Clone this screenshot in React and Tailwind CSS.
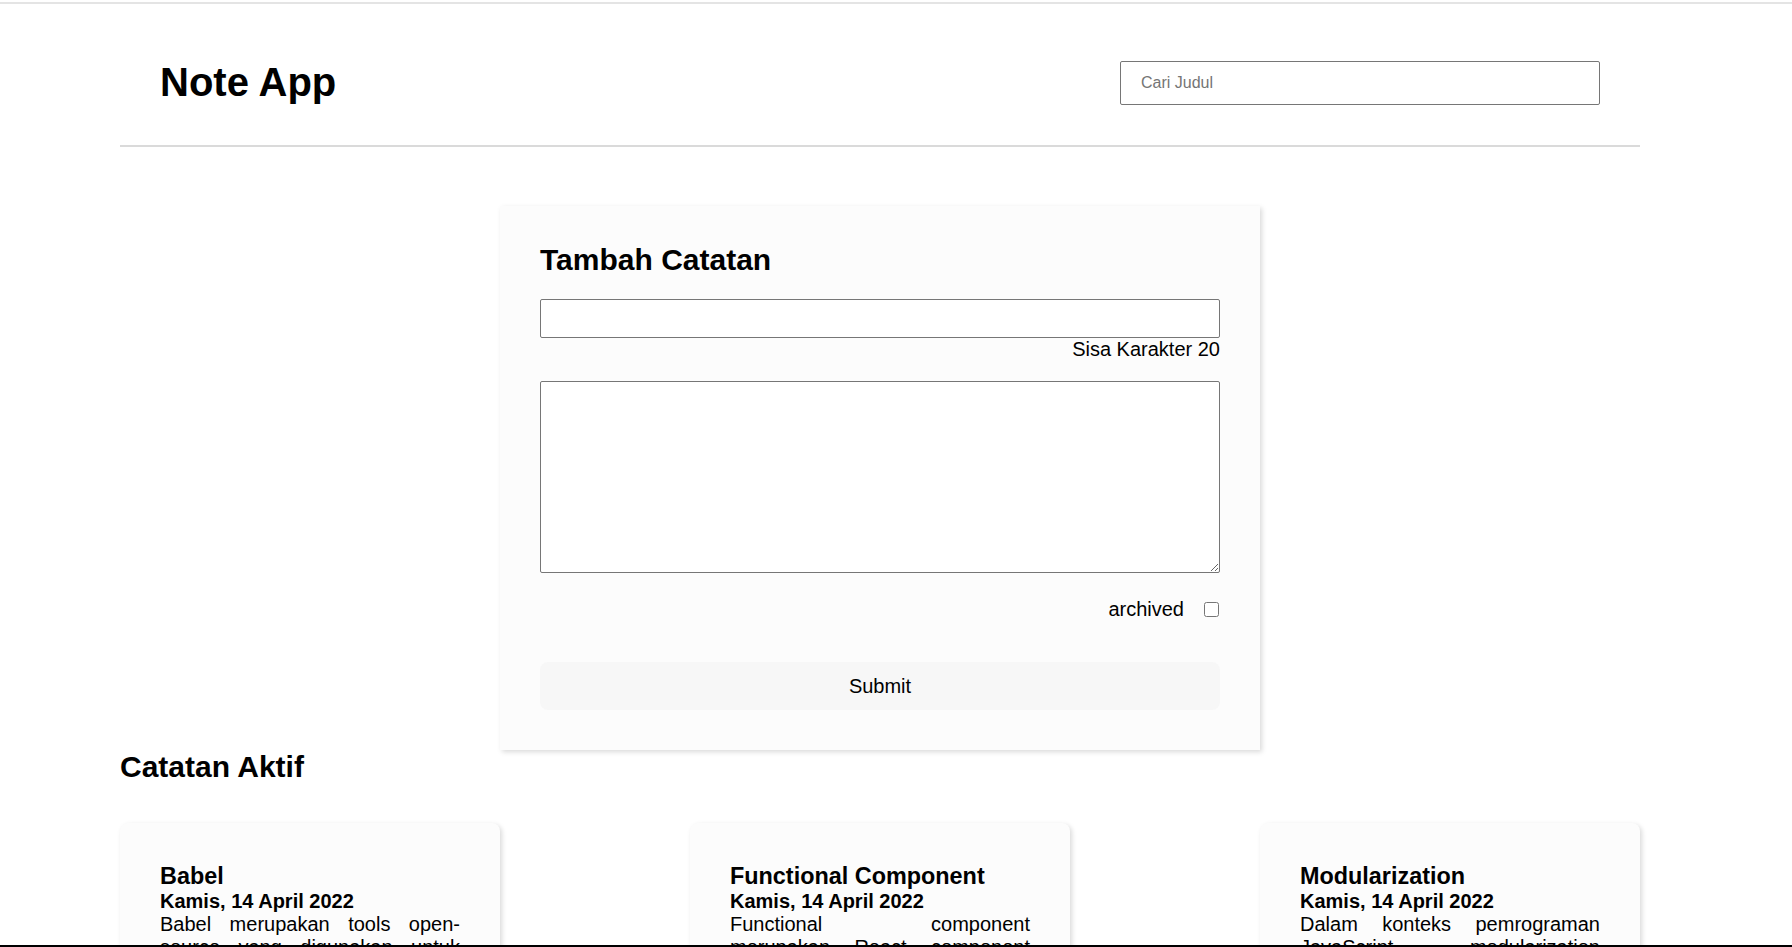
import { useState } from 'react';

const notes = [
    {
        id: 1,
        title: 'Babel',
        date: 'Kamis, 14 April 2022',
        body: 'Babel merupakan tools open-source yang digunakan untuk mengubah sintaks ECMAScript 2015+ menjadi sintaks yang didukung oleh JavaScript engine versi lama. Babel sering dipakai ketika kita menggunakan sintaks terbaru termasuk sintaks JSX.',
    },
    {
        id: 2,
        title: 'Functional Component',
        date: 'Kamis, 14 April 2022',
        body: 'Functional component merupakan React component yang dibuat menggunakan fungsi JavaScript. Agar fungsi JavaScript dapat disebut component ia harus mengembalikan React element dan dipanggil layaknya React component.',
    },
    {
        id: 3,
        title: 'Modularization',
        date: 'Kamis, 14 April 2022',
        body: 'Dalam konteks pemrograman JavaScript, modularization merupakan teknik dalam memecah atau menggunakan kode dalam berkas JavaScript secara terpisah berdasarkan tanggung jawabnya masing-masing.',
    },
];

function NoteCard({ note }) {
    return (
        <div className="w-[380px] rounded-lg bg-[#fcfcfc] p-10 shadow-[2px_2px_5px_rgba(0,0,0,0.15)]">
            <h3 className="text-[23.4px] font-bold leading-[normal]">{note.title}</h3>
            <p className="text-[20px] font-bold leading-[normal]">{note.date}</p>
            <p className="text-[20px] leading-[normal] text-justify">{note.body}</p>
        </div>
    );
}

export default function App() {
    const [title, setTitle] = useState('');
    const [body, setBody] = useState('');
    const [archived, setArchived] = useState(false);
    const [search, setSearch] = useState('');

    const maxChar = 20;

    return (
        <div className="min-h-screen bg-white text-black font-['Liberation_Sans',Arial,sans-serif] text-[20px] leading-[normal]">
            <div className="h-[4px] border-b-2 border-[#e4e4e4]" />

            <div className="ml-[120px] w-[1520px]">
                {/* Header */}
                <header className="flex items-center justify-between border-b-2 border-[#dadada] px-10 pt-[56px] pb-[40px]">
                    <h1 className="text-[40px] font-bold leading-[normal]">Note App</h1>
                    <input
                        type="text"
                        value={search}
                        onChange={(e) => setSearch(e.target.value)}
                        placeholder="Cari Judul"
                        className="h-[44px] w-[480px] rounded-[2px] border border-[#767676] bg-white px-5 text-[16px] placeholder:text-[#757575] outline-none"
                    />
                </header>

                {/* Form */}
                <div className="mx-auto mt-[59px] w-[760px] bg-[#fcfcfc] px-10 pt-[37px] pb-10 shadow-[2px_2px_5px_rgba(0,0,0,0.15)]">
                    <h2 className="text-[30px] font-bold leading-[normal]">Tambah Catatan</h2>
                    <input
                        type="text"
                        value={title}
                        onChange={(e) => setTitle(e.target.value.slice(0, maxChar))}
                        className="mt-[22px] block h-[39px] w-full rounded-[2px] border border-[#767676] bg-white px-2 outline-none"
                    />
                    <p className="text-right leading-[normal]">Sisa Karakter {maxChar - title.length}</p>
                    <textarea
                        value={body}
                        onChange={(e) => setBody(e.target.value)}
                        className="mt-5 block h-[192px] w-full rounded-[2px] border border-[#767676] bg-white p-2 outline-none"
                    />
                    <div className="mt-[25px] flex items-center justify-end">
                        <label htmlFor="archived" className="leading-[normal]">archived</label>
                        <input
                            id="archived"
                            type="checkbox"
                            checked={archived}
                            onChange={(e) => setArchived(e.target.checked)}
                            className="ml-5 mr-[1px] h-[15px] w-[15px]"
                        />
                    </div>
                    <button className="mt-[41px] block h-12 w-full rounded-lg bg-[#f7f7f7] text-[20px]">
                        Submit
                    </button>
                </div>

                {/* Notes */}
                <h2 className="text-[30px] font-bold leading-[normal]">Catatan Aktif</h2>
                <div className="mt-[39px] flex flex-wrap justify-between gap-y-10">
                    {notes.map((note) => (
                        <NoteCard key={note.id} note={note} />
                    ))}
                </div>
            </div>

            <div className="fixed bottom-0 left-0 right-0 h-[2px] bg-black" />
        </div>
    );
}
